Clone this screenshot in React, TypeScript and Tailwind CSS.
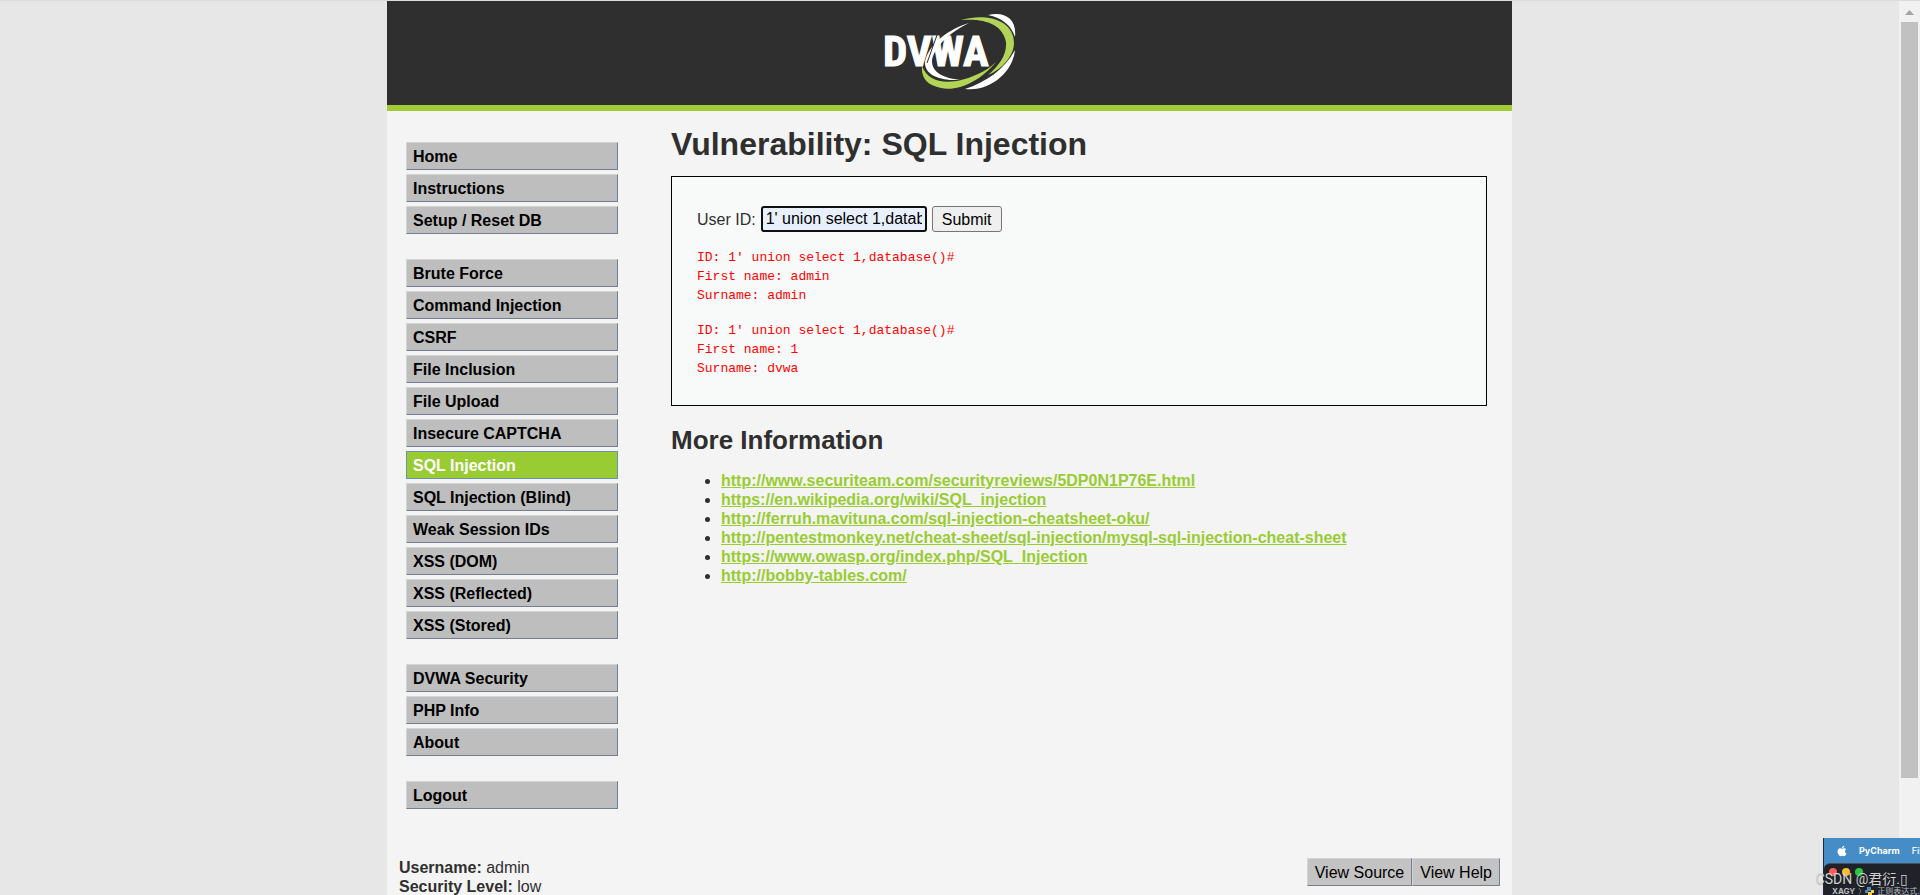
import React, { useState } from "react";
import clsx from "clsx";

const menuGroups = [
  ["Home", "Instructions", "Setup / Reset DB"],
  [
    "Brute Force",
    "Command Injection",
    "CSRF",
    "File Inclusion",
    "File Upload",
    "Insecure CAPTCHA",
    "SQL Injection",
    "SQL Injection (Blind)",
    "Weak Session IDs",
    "XSS (DOM)",
    "XSS (Reflected)",
    "XSS (Stored)",
  ],
  ["DVWA Security", "PHP Info", "About"],
  ["Logout"],
];

const links = [
  "http://www.securiteam.com/securityreviews/5DP0N1P76E.html",
  "https://en.wikipedia.org/wiki/SQL_injection",
  "http://ferruh.mavituna.com/sql-injection-cheatsheet-oku/",
  "http://pentestmonkey.net/cheat-sheet/sql-injection/mysql-sql-injection-cheat-sheet",
  "https://www.owasp.org/index.php/SQL_Injection",
  "http://bobby-tables.com/",
];

const results = [
  { id: "1' union select 1,database()#", first: "admin", surname: "admin" },
  { id: "1' union select 1,database()#", first: "1", surname: "dvwa" },
];

function Logo() {
  return (
    <svg width="136" height="78" viewBox="0 0 136 78" role="img" aria-label="DVWA">
      {/* white swoosh */}
      <path
        d="M106 2 C122 -2 135 5 133 24 C129 12 120 5 106 2Z M133 37 C131 59 108 79 83 76 C104 69 122 57 133 37Z"
        fill="#fff"
      />
      <path
        d="M87 10 C62 17 43 37 43 51 C44 63 60 68 78 67 C62 65 50 60 50 48 C51 36 66 20 87 10Z"
        fill="#fff"
      />
      {/* green swoosh */}
      <path
        d="M79 7 C108 -1 132 9 132 30 C132 42 121 56 106 62 C118 52 125 41 124 29 C121 12 104 5 79 7Z"
        fill="#b2d558"
      />
      <path
        d="M40 53 C46 70 68 74 96 61 C103 58 109 54 114 49 C99 68 75 79 59 75 C45 72 39 65 40 53Z"
        fill="#b2d558"
      />
      <text
        x="1"
        y="53"
        fill="#fff"
        stroke="#fff"
        strokeWidth="1"
        fontFamily="'Roboto Condensed', Roboto, sans-serif"
        fontWeight="700"
        fontSize="43">
        DVWA
      </text>
      {/* gap between the V and the swoosh */}
      <path d="M55 22 L45 50" stroke="#2f2f2f" strokeWidth="1" fill="none" />
    </svg>
  );
}

function Scrollbar() {
  return (
    <div className="flex w-[21px] shrink-0 flex-col items-center bg-[#f1f1f1]">
      <svg width="21" height="21" viewBox="0 0 21 21" aria-hidden="true">
        <path d="M6 14 L10.500 9 L15 14Z" fill="#a3a3a3" />
      </svg>
      <div className="h-[756px] w-[17px] bg-[#c1c1c1]" />
    </div>
  );
}

function DesktopCorner() {
  return (
    <div className="absolute right-0 bottom-0 h-[57px] w-[97px] overflow-hidden border-l border-[#1c2a38] bg-[#468dc8]">
      <div className="flex h-[25px] items-center gap-3 pl-[13px] font-['Inter',sans-serif] text-[9px] font-bold whitespace-nowrap text-white">
        <svg
          width="10"
          height="12"
          viewBox="0 0 384 512"
          fill="currentColor"
          aria-hidden="true"
          className="shrink-0">
          <path d="M318.700 268.700c-.2-36.700 16.400-64.400 50-84.800-18.800-26.900-47.200-41.700-84.700-44.600-35.500-2.800-74.300 20.700-88.500 20.700-15 0-49.400-19.700-76.400-19.700C63.300 141.200 4 184.800 4 273.500q0 39.300 14.400 81.200c12.800 36.700 59 126.700 107.200 125.200 25.200-.6 43-17.900 75.800-17.900 31.800 0 48.300 17.900 76.400 17.900 48.600-.7 90.400-82.500 102.600-119.300-65.200-30.700-61.700-90-61.700-91.900zm-56.600-164.200c27.300-32.400 24.800-61.900 24-72.500-24.100 1.400-52 16.400-67.900 34.900-17.500 19.800-27.800 44.300-25.600 71.900 26.100 2 49.900-11.400 69.500-34.300z" />
        </svg>
        <span>PyCharm</span>
        <span className="font-medium">File</span>
      </div>
      <div className="h-8 rounded-tl-md border-t border-[#4a5058] bg-[#1f2329] pt-1 pl-[5px]">
        <div className="flex gap-[5px]">
          <span className="size-2 rounded-full bg-[#fc5b57]" />
          <span className="size-2 rounded-full bg-[#fdbc2e]" />
          <span className="size-2 rounded-full bg-[#28c840]" />
        </div>
        <div className="mt-2 flex items-center gap-[3px] pl-[3px] font-['Inter','Noto_Sans_CJK_SC',sans-serif] text-[8px] leading-[14px] whitespace-nowrap text-[#b8bcc2]">
          <span className="font-bold">XAGY</span>
          <svg width="4" height="8" viewBox="0 0 4 8" fill="none" stroke="#6b7078" aria-hidden="true" className="shrink-0">
            <path d="M1 1 L3 4 L1 7" />
          </svg>
          <svg width="9" height="9" viewBox="0 0 9 9" aria-hidden="true" className="shrink-0">
            <path d="M2 0h4v4H3v2H0V3h2z" fill="#4b8bbe" />
            <path d="M7 9H3V5h3V3h3v3H7z" fill="#ffd43b" />
          </svg>
          <span>正则表达式.py</span>
        </div>
      </div>
    </div>
  );
}

export default function App() {
  const [userId, setUserId] = useState("1' union select 1,database()#");
  const [active, setActive] = useState("SQL Injection");

  return (
    <div className="relative flex h-screen overflow-hidden border-t border-[#dcdcdc] bg-[#e7e7e7] font-['Liberation_Sans',Arial,sans-serif] text-[16px] leading-[19px] text-[#2f2f2f]">
      <div className="flex-1">
        <div className="mx-auto max-w-[1125px] bg-[#f4f4f4]">
          <header className="flex h-[110px] justify-center border-b-[6px] border-[#a1cc33] bg-[#2f2f2f] pt-3">
            <Logo />
          </header>

          <div className="flex">
            {/* Main menu */}
            <nav className="flex w-[284px] shrink-0 flex-col gap-[25px] pt-[31px] pl-[19px]">
              {menuGroups.map((group) => (
                <ul key={group[0]} className="flex w-[212px] flex-col gap-1">
                  {group.map((item) => (
                    <li key={item}>
                      <a
                        href="#"
                        onClick={() => setActive(item)}
                        className={clsx(
                          "block h-7 border pl-[6px] leading-[27px] font-bold",
                          item === active
                            ? "border-[#6f8fb0] bg-[#99cc33] text-white"
                            : "border-t-[#d3d3d3] border-r-[#708090] border-b-[#708090] border-l-[#d3d3d3] bg-[#bebebe] text-black"
                        )}>
                        {item}
                      </a>
                    </li>
                  ))}
                </ul>
              ))}
            </nav>

            {/* Main body */}
            <main className="flex-1 pr-[25px] pt-4">
              <h1 className="text-[32px] leading-[35px] font-bold">
                Vulnerability: SQL Injection
              </h1>

              <div className="mt-[14px] border border-black bg-[#f8faf9] px-[25px] pt-[29px] pb-[27px]">
                <form
                  className="flex items-center gap-[5px]"
                  onSubmit={(e) => e.preventDefault()}>
                  <label htmlFor="user-id">User ID:</label>
                  <input
                    id="user-id"
                    type="text"
                    value={userId}
                    onChange={(e) => setUserId(e.target.value)}
                    className="h-[26px] w-[166px] rounded-[3px] border-2 border-[#101010] bg-[#e8f0fe] px-[3px] text-black outline-none"
                  />
                  <button
                    type="submit"
                    className="h-[26px] w-[70px] rounded-[3px] border border-[#767676] bg-[#efefef] text-black">
                    Submit
                  </button>
                </form>

                <div className="mt-4 flex flex-col gap-4 text-[13px] text-[#ff0000]">
                  {results.map((row, i) => (
                    <pre key={i} className="font-['Liberation_Mono',monospace]">
                      {`ID: ${row.id}\nFirst name: ${row.first}\nSurname: ${row.surname}`}
                    </pre>
                  ))}
                </div>
              </div>

              <h2 className="mt-[19px] text-[26px] leading-[30px] font-bold">
                More Information
              </h2>
              <ul className="mt-4 list-disc pl-[50px]">
                {links.map((link) => (
                  <li key={link}>
                    <a href={link} className="font-bold text-[#99cc33] underline">
                      {link}
                    </a>
                  </li>
                ))}
              </ul>
            </main>
          </div>

          {/* System info */}
          <div className="flex items-start justify-between px-3 pt-[49px] pb-10">
            <div>
              <p>
                <b>Username:</b> admin
              </p>
              <p>
                <b>Security Level:</b> low
              </p>
            </div>
            <div className="flex">
              {["View Source", "View Help"].map((label) => (
                <button
                  key={label}
                  type="button"
                  className="h-7 border border-t-[#d3d3d3] border-r-[#708090] border-b-[#708090] border-l-[#d3d3d3] bg-[#c3c3c3] px-[7px] text-black">
                  {label}
                </button>
              ))}
            </div>
          </div>
        </div>
      </div>

      <Scrollbar />
      <DesktopCorner />
      <span className="absolute right-3 bottom-1 font-['Roboto','Noto_Sans_CJK_SC',sans-serif] text-[14px] leading-6 whitespace-nowrap text-[#d0d0d0] text-shadow-xs">
        CSDN @君衍.▯
      </span>
    </div>
  );
}
